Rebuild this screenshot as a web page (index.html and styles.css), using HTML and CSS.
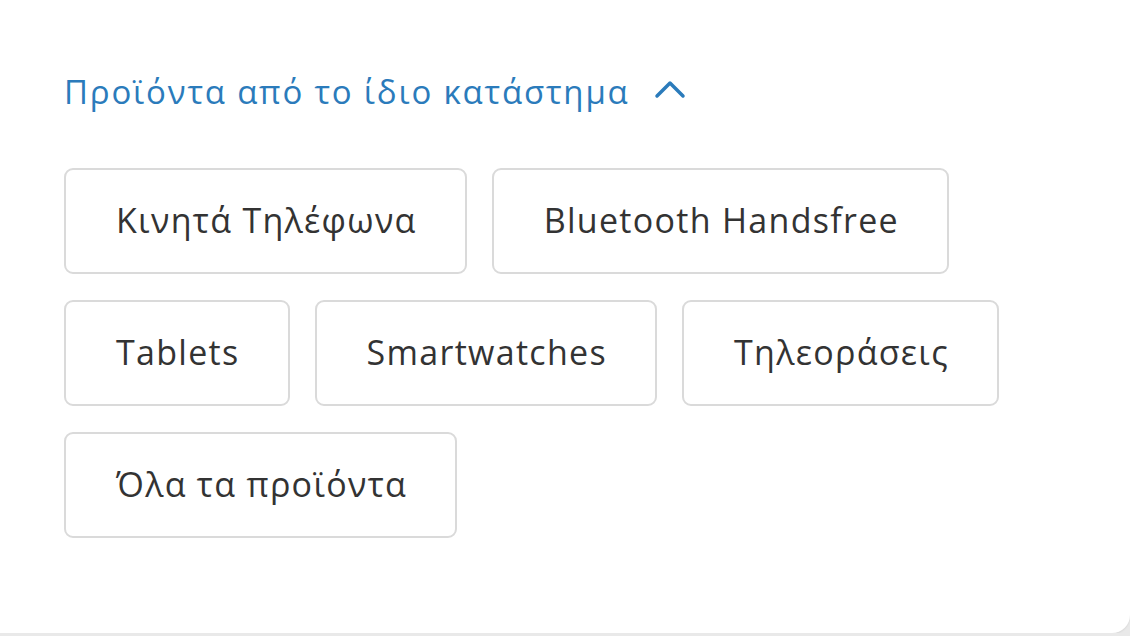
FILE: index.html
```html
<!DOCTYPE html>
<html lang="el">
<head>
    <meta charset="utf-8">
    <title>Προϊόντα από το ίδιο κατάστημα</title>
    <link rel="stylesheet" href="styles.css">
</head>
<body>
<div class="card">
    <div class="title">
        <span>Προϊόντα από το ίδιο κατάστημα</span>
        <svg class="chevron" width="32" height="20" viewBox="0 0 32 20">
            <polyline points="3,17 16,4 29,17" fill="none" stroke="#2b7bbb" stroke-width="3.5" stroke-linecap="round" stroke-linejoin="round"/>
        </svg>
    </div>
    <div class="chips">
        <a class="chip">Κινητά Τηλέφωνα</a>
        <a class="chip">Bluetooth Handsfree</a>
        <a class="chip">Tablets</a>
        <a class="chip">Smartwatches</a>
        <a class="chip">Τηλεοράσεις</a>
        <a class="chip">Όλα τα προϊόντα</a>
    </div>
</div>
</body>
</html>
```

FILE: styles.css
```css
body {
    margin: 0;
    background: #e9e9e9;
    font-family: "Open Sans", "Noto Sans", sans-serif;
}
.card {
    box-sizing: border-box;
    height: 633px;
    padding: 72px 64px 0 64px;
    background: #fff;
    border-bottom-right-radius: 18px;
    box-shadow: 0 1px 2px rgba(0, 0, 0, 0.08);
}
.title {
    display: flex;
    align-items: center;
    gap: 24px;
    font-size: 33px;
    line-height: 40px;
    letter-spacing: 1.8px;
    color: #2b7bbb;
}
.chevron {
    margin-top: -6px;
}
.chips {
    display: flex;
    flex-wrap: wrap;
    gap: 26px 25px;
    margin-top: 56px;
}
.chip {
    box-sizing: border-box;
    display: flex;
    align-items: center;
    height: 106px;
    padding: 0 48px 2px 50px;
    border: 2px solid #dadada;
    border-radius: 9px;
    font-size: 34px;
    line-height: 34px;
    letter-spacing: 1.3px;
    color: #333;
}
```
